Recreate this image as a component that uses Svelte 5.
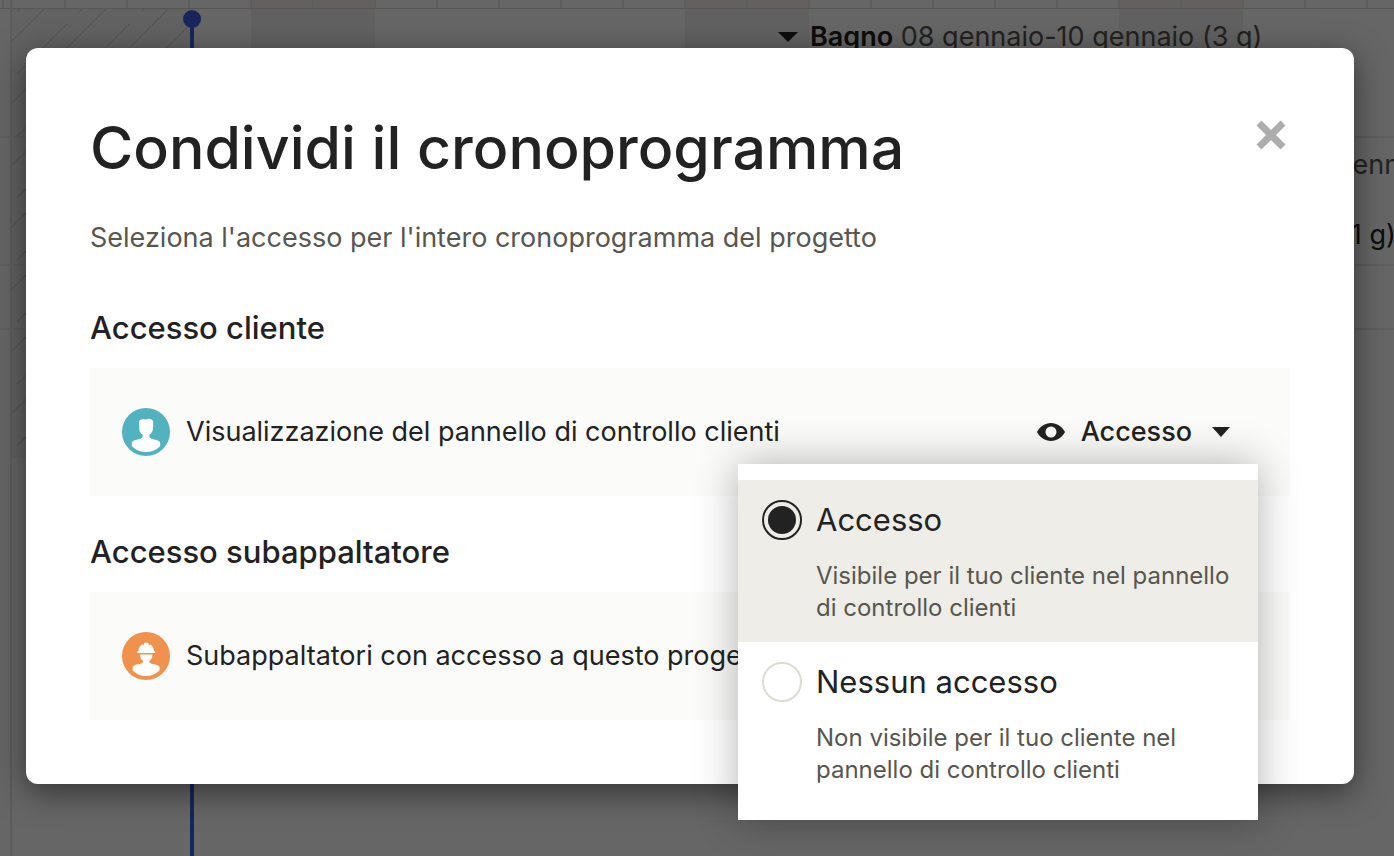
<script>
  const options = [
    {
      value: 'access',
      label: 'Accesso',
      text: 'Visibile per il tuo cliente nel pannello di controllo clienti'
    },
    {
      value: 'none',
      label: 'Nessun accesso',
      text: 'Non visibile per il tuo cliente nel pannello di controllo clienti'
    }
  ];

  let access = $state('access');
  let menuOpen = $state(true);
</script>

<div class="page">
  <div class="timeline" aria-hidden="true">
    <svg class="grid" width="100%" height="100%">
      <defs>
        <pattern id="week" x="3" y="0" width="434" height="458" patternUnits="userSpaceOnUse">
          <rect x="248" y="9" width="124" height="449" fill="#f2f2f2" />
          <rect x="248" y="0" width="124" height="8" fill="#f8f1ee" />
        </pattern>
        <pattern id="days" x="2" y="0" width="62" height="9" patternUnits="userSpaceOnUse">
          <rect width="2" height="9" fill="#ecebe7" />
        </pattern>
        <pattern id="hatch" x="12" y="12" width="62" height="62" patternUnits="userSpaceOnUse">
          <path d="M0 29 30 -1M29 62 62 29M5 62 55 12" stroke="#d0d0ce" stroke-width="1" fill="none" />
        </pattern>
      </defs>
      <rect width="100%" height="458" fill="url(#week)" />
      <rect width="100%" height="8" fill="url(#days)" />
      <rect x="12" y="9" width="178" height="449" fill="#f5f5f5" />
      <rect x="12" y="9" width="178" height="449" fill="url(#hatch)" />
      <rect y="8" width="100%" height="1" fill="#d6d5cf" />
      <rect y="136" width="100%" height="2" fill="#ecebe7" />
      <rect y="264" width="100%" height="2" fill="#ecebe7" />
      <rect y="328" width="100%" height="2" fill="#ecebe7" />
      <rect x="10" width="2" height="100%" fill="#e6e5e0" />
      <rect x="190" y="19" width="4" height="100%" fill="#3c5fe6" />
      <circle cx="192" cy="19" r="9" fill="#3c5fe6" />
    </svg>
    <p class="bar bagno">
      <svg width="20" height="10" viewBox="0 0 20 10"><path d="M0 0h20L10 10z" fill="#222" /></svg>
      <span><strong>Bagno</strong> 08 gennaio-10 gennaio (3 g)</span>
    </p>
    <p class="bar month">gennaio</p>
    <p class="bar days">(1 g)</p>
  </div>

  <div class="backdrop">
    <div class="dialog" role="dialog" aria-modal="true" aria-labelledby="dialog-title">
      <header>
        <h1 id="dialog-title">Condividi il cronoprogramma</h1>
        <button class="close" type="button" aria-label="Chiudi">
          <svg width="30" height="30" viewBox="0 0 30 30"
            ><path d="M3 3 27 27M27 3 3 27" stroke="#adadad" stroke-width="7" /></svg>
        </button>
      </header>
      <p class="intro">Seleziona l'accesso per l'intero cronoprogramma del progetto</p>

      <section>
        <h2>Accesso cliente</h2>
        <div class="row">
          <svg class="avatar" width="48" height="48" viewBox="0 0 48 48">
            <circle cx="24" cy="24" r="24" fill="#52b2bf" />
            <path
              fill="#fff"
              d="M17.300 19 17 14.500C17 12.400 18 11.600 19.600 11.500C21 10.700 22.600 10.800 23.600 11.800C25 10.600 28 10.600 29.600 11.600C31.200 12.500 31.300 14.500 31.200 16.500L30.800 21.500C30.600 24 29.200 25.600 27.400 26.600V28.600C27.600 30.400 30 30.900 32 31.400C35.600 32.200 38 33 38.200 34.800V38C34.600 42 29.600 44 24 44S13.400 42 9.800 38V34.800C10 33 12.400 32.200 16 31.400C18 30.900 20.400 30.400 20.600 28.600V26.600C18.800 25.600 17.500 24 17.400 21.500Z"
            />
          </svg>
          <span class="name">Visualizzazione del pannello di controllo clienti</span>
          <div class="picker">
            <button
              class="trigger"
              type="button"
              aria-expanded={menuOpen}
              aria-controls="access-menu"
              onclick={() => (menuOpen = !menuOpen)}
            >
              <svg width="28" height="18" viewBox="0 0 28 18">
                <path
                  fill="#222"
                  fill-rule="evenodd"
                  d="M0 9C3 3.500 8 0 14 0s11 3.500 14 9c-3 5.500-8 9-14 9S3 14.500 0 9zm14-5.500a5.500 5.500 0 1 0 0 11 5.500 5.500 0 0 0 0-11z"
                />
              </svg>
              <span>Accesso</span>
              <svg width="18" height="10" viewBox="0 0 18 10"><path d="M0 0h18L9 10z" fill="#222" /></svg>
            </button>
            {#if menuOpen}
              <div class="menu" id="access-menu" role="radiogroup" aria-label="Accesso cliente">
                {#each options as option}
                  <label class="option" class:selected={access === option.value}>
                    <input type="radio" name="access" value={option.value} bind:group={access} />
                    <span class="copy">
                      <span class="label">{option.label}</span>
                      <span class="text">{option.text}</span>
                    </span>
                  </label>
                {/each}
              </div>
            {/if}
          </div>
        </div>
      </section>

      <section>
        <h2>Accesso subappaltatore</h2>
        <div class="row">
          <svg class="avatar" width="48" height="48" viewBox="0 0 48 48">
            <circle cx="24" cy="24" r="24" fill="#f0914d" />
            <path
              fill="#fff"
              d="M15.200 21V19.400L16.400 18.900C16.600 15.800 18 13.400 20.600 12.200L21.400 14.200 22 11.200C23.200 10.200 25.200 10.200 26.400 11.200L27 14.200 27.800 12.200C30.400 13.400 31.800 15.800 32 18.900L33.200 19.400V21Z"
            />
            <path
              fill="#fff"
              d="M18 22.400H30.400C30.400 25.400 29.400 27.600 27.400 28.800V30.200C27.800 31.400 30 31.800 32 32.200C35.400 33 37.400 33.600 37.600 35.400V38.200C34 42 29.400 44 24 44S14 42 10.600 38.200V35.400C10.800 33.600 12.800 33 16.200 32.200C18.200 31.800 20.600 31.400 21 30.200V28.800C19 27.600 18 25.400 18 22.400Z"
            />
          </svg>
          <span class="name">Subappaltatori con accesso a questo progetto</span>
        </div>
      </section>
    </div>
  </div>
</div>

<style>
  :global(body) {
    margin: 0;
    background: #fff;
  }

  .page {
    position: relative;
    min-height: 100vh;
    overflow: hidden;
    color: #222;
    font-family: Inter, 'Open Sans', sans-serif;
    font-size: 27px;
    line-height: 36px;
  }

  .timeline,
  .grid {
    position: absolute;
    inset: 0;
  }

  .bar {
    position: absolute;
    display: flex;
    align-items: center;
    margin: 0;
    white-space: nowrap;
  }

  .bagno {
    top: 19px;
    left: 778px;
    gap: 12px;
    color: #57564f;
  }

  .bagno strong {
    color: #222;
    font-weight: 600;
  }

  .month {
    top: 147px;
    left: 1336px;
    color: #57564f;
  }

  .days {
    top: 217px;
    left: 1341px;
  }

  .backdrop {
    position: relative;
    box-sizing: border-box;
    min-height: 100vh;
    padding: 48px 40px 72px 26px;
    background: rgba(0, 0, 0, 0.6);
  }

  .dialog {
    padding: 64px;
    border-radius: 12px;
    background: #fff;
    box-shadow: 0 8px 32px rgba(0, 0, 0, 0.5);
  }

  header {
    display: flex;
    align-items: flex-start;
    justify-content: space-between;
  }

  h1,
  h2,
  p {
    margin: 0;
  }

  h1 {
    font-size: 59px;
    font-weight: 500;
    line-height: 72px;
  }

  button {
    border: 0;
    background: none;
    color: inherit;
    font: inherit;
    cursor: pointer;
  }

  .close {
    display: flex;
    padding: 8px 4px;
  }

  .intro {
    margin: 36px 0 52px;
    color: #57564f;
  }

  section + section {
    margin-top: 36px;
  }

  h2 {
    margin-bottom: 20px;
    font-size: 31px;
    font-weight: 500;
    line-height: 40px;
  }

  .row {
    display: flex;
    align-items: center;
    gap: 16px;
    height: 128px;
    padding: 0 32px;
    background: #fbfbf9;
  }

  .avatar {
    flex: none;
  }

  .name {
    flex: 1;
  }

  .picker {
    position: relative;
  }

  .trigger {
    display: flex;
    align-items: center;
    gap: 16px;
    padding: 14px 28px;
    font-weight: 500;
  }

  .trigger span {
    margin-right: 4px;
  }

  .menu {
    position: absolute;
    z-index: 1;
    top: 100%;
    right: 0;
    width: 520px;
    box-sizing: border-box;
    padding: 16px 0;
    background: #fff;
    box-shadow: 0 0 40px rgba(0, 0, 0, 0.3);
  }

  .option {
    display: flex;
    gap: 14px;
    padding: 20px 24px 18px;
  }

  .option.selected {
    background: #eeede8;
  }

  input {
    flex: none;
    width: 40px;
    height: 40px;
    box-sizing: border-box;
    margin: 0;
    appearance: none;
    border: 2px solid #dedbd2;
    border-radius: 50%;
    background: #fff;
  }

  input:checked {
    padding: 4px;
    border-color: #222;
    background: #222 content-box;
  }

  .copy {
    display: flex;
    flex-direction: column;
    gap: 20px;
  }

  .label {
    font-size: 31px;
    line-height: 40px;
  }

  .text {
    color: #57564f;
    font-size: 24px;
    line-height: 32px;
  }
</style>
